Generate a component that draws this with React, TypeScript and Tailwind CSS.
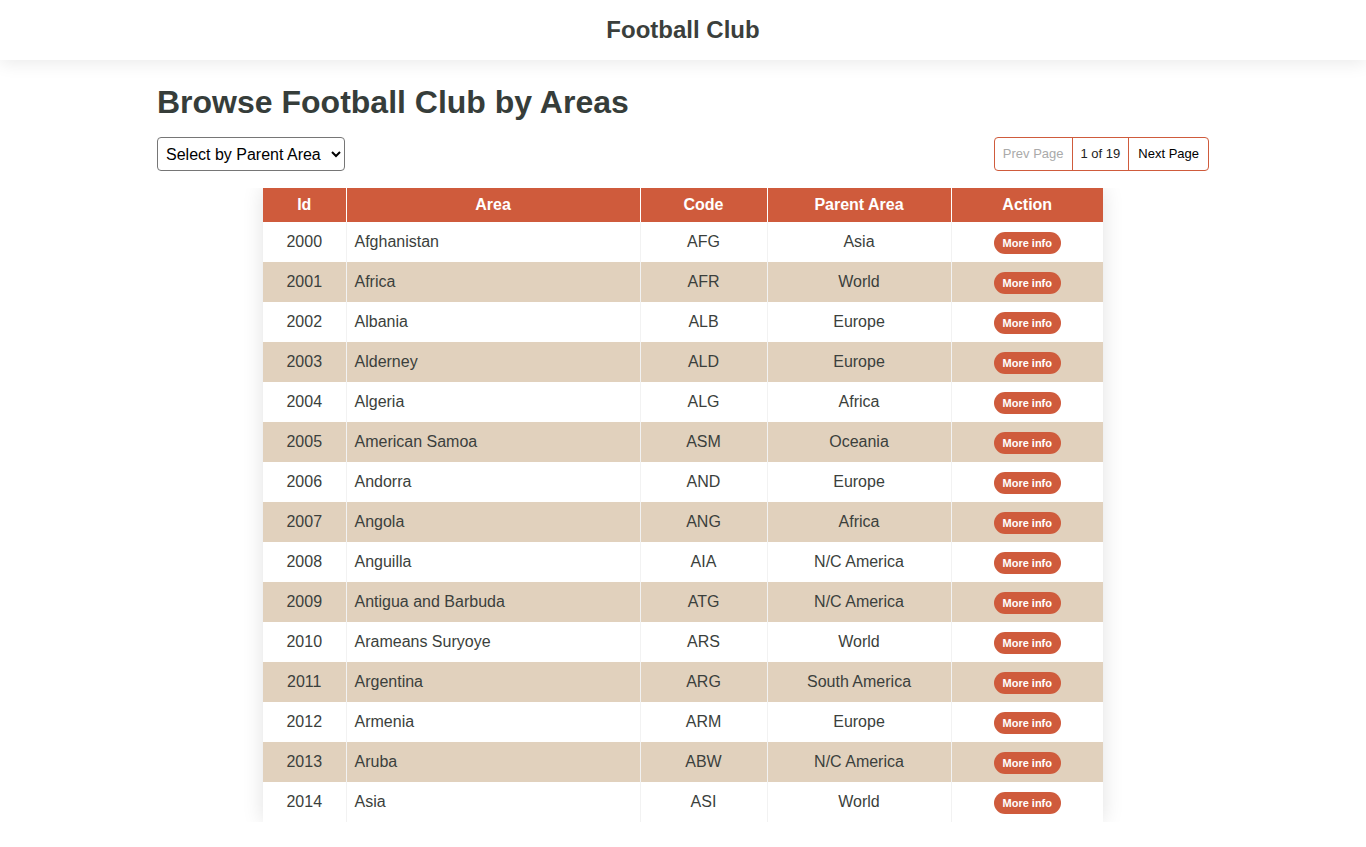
import React from "react";

const areas = [
  { id: 2000, name: "Afghanistan", code: "AFG", parent: "Asia" },
  { id: 2001, name: "Africa", code: "AFR", parent: "World" },
  { id: 2002, name: "Albania", code: "ALB", parent: "Europe" },
  { id: 2003, name: "Alderney", code: "ALD", parent: "Europe" },
  { id: 2004, name: "Algeria", code: "ALG", parent: "Africa" },
  { id: 2005, name: "American Samoa", code: "ASM", parent: "Oceania" },
  { id: 2006, name: "Andorra", code: "AND", parent: "Europe" },
  { id: 2007, name: "Angola", code: "ANG", parent: "Africa" },
  { id: 2008, name: "Anguilla", code: "AIA", parent: "N/C America" },
  { id: 2009, name: "Antigua and Barbuda", code: "ATG", parent: "N/C America" },
  { id: 2010, name: "Arameans Suryoye", code: "ARS", parent: "World" },
  { id: 2011, name: "Argentina", code: "ARG", parent: "South America" },
  { id: 2012, name: "Armenia", code: "ARM", parent: "Europe" },
  { id: 2013, name: "Aruba", code: "ABW", parent: "N/C America" },
  { id: 2014, name: "Asia", code: "ASI", parent: "World" },
];

const App: React.FC = () => {
  return (
    <div className="h-screen overflow-hidden bg-white font-['Liberation_Sans',Arial,sans-serif] text-[#3b3f3c]">
      {/* Top bar */}
      <header className="h-[60px] flex items-center justify-center bg-white shadow-[0_4px_16px_rgba(0,0,0,0.08)] relative z-10">
        <h2 className="text-[24px] font-bold text-[#3b3f3c]">Football Club</h2>
      </header>

      <main className="w-[1052px] mx-auto">
        <h1 className="text-[32px] font-bold leading-none pt-[26px] text-[#363d3a]">
          Browse Football Club by Areas
        </h1>

        {/* Filter + pagination */}
        <div className="flex items-center justify-between mt-[19px]">
          <select className="h-[34px] w-[188px] border border-[#767676] rounded-[4px] px-[4px] text-[16px] text-black bg-white">
            <option>Select by Parent Area</option>
          </select>
          <div className="flex h-[34px] border border-[#cf5b3c] rounded-[4px] text-[13px]">
            <button className="px-[8px] text-[#aaaaaa]">Prev Page</button>
            <span className="px-[8px] flex items-center border-l border-r border-[#cf5b3c] text-[#222]">
              1 of 19
            </span>
            <button className="px-[9px] text-black">Next Page</button>
          </div>
        </div>

        {/* Table */}
        <div className="mt-[17px] h-[634px] overflow-hidden flex justify-center">
          <div className="w-[840px] shadow-[0_0_20px_rgba(0,0,0,0.12)] self-start">
            <table className="w-full border-collapse text-[16px]">
              <thead>
                <tr className="bg-[#cf5b3c] text-white h-[34px]">
                  <th className="w-[83px] font-bold border-r border-white">Id</th>
                  <th className="w-[294px] font-bold border-r border-white">Area</th>
                  <th className="w-[127px] font-bold border-r border-white">Code</th>
                  <th className="w-[184px] font-bold border-r border-white">Parent Area</th>
                  <th className="w-[152px] font-bold">Action</th>
                </tr>
              </thead>
              <tbody>
                {areas.map((a, i) => (
                  <tr
                    key={a.id}
                    className={`h-[40px] ${i % 2 === 1 ? "bg-[#e1d1bd]" : "bg-white"}`}
                  >
                    <td className="text-center border-r border-[#f2f2f2]">{a.id}</td>
                    <td className="px-[8px] border-r border-[#f2f2f2]">{a.name}</td>
                    <td className="text-center border-r border-[#f2f2f2]">{a.code}</td>
                    <td className="text-center border-r border-[#f2f2f2]">{a.parent}</td>
                    <td className="text-center">
                      <button className="bg-[#cf5b3c] text-white text-[11px] font-bold rounded-full h-[22px] px-[9px]">
                        More info
                      </button>
                    </td>
                  </tr>
                ))}
              </tbody>
            </table>
          </div>
        </div>
      </main>
    </div>
  );
};

export default App;
